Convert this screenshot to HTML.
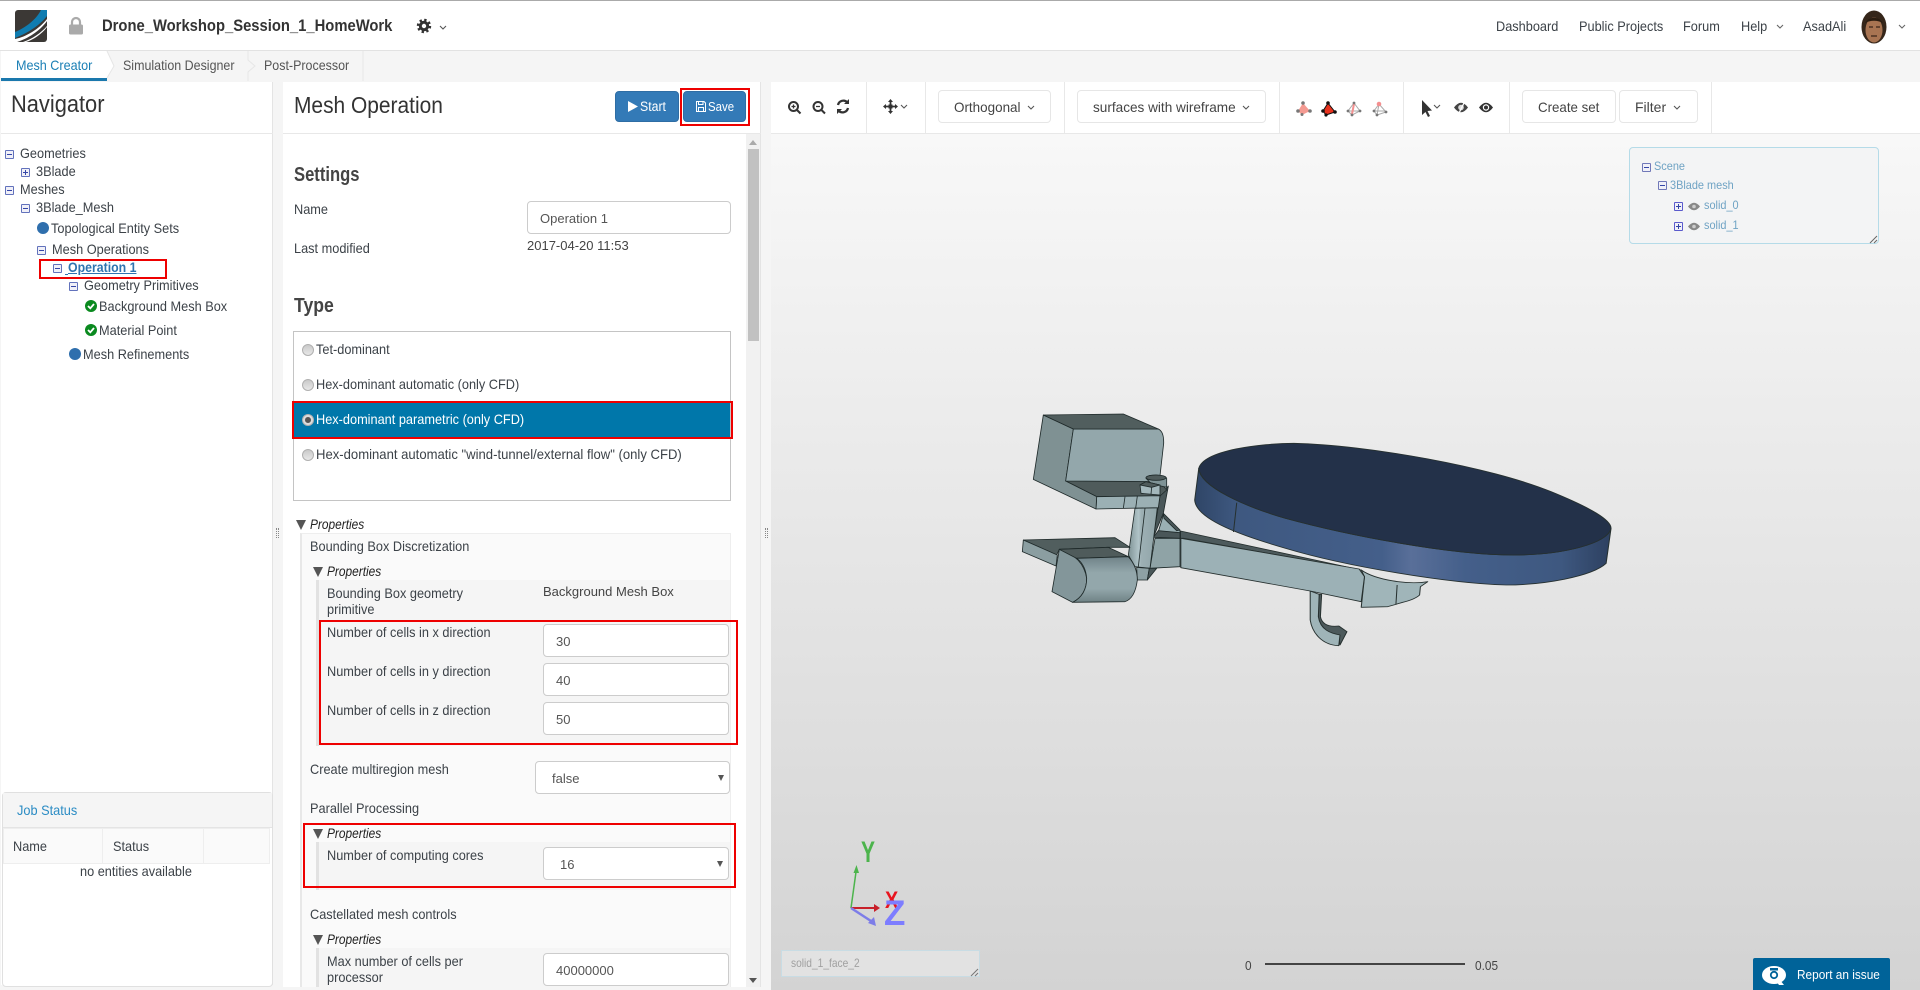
<!DOCTYPE html>
<html><head><meta charset="utf-8"><title>Mesh Operation</title>
<style>
html,body{margin:0;padding:0;width:1920px;height:990px;overflow:hidden;background:#f5f5f5;font-family:"Liberation Sans",sans-serif;color:#3c4248}
.r{position:absolute;box-sizing:border-box}
.t{position:absolute;white-space:nowrap;line-height:20px;font-size:14px;transform:scaleX(.91);transform-origin:0 0;font-weight:normal;font-style:normal}
.pr{font-style:italic;color:#222;transform:scaleX(.85)}
.a{position:absolute;white-space:nowrap;line-height:20px;font-size:13px;color:#555}
.red{position:absolute;box-sizing:border-box;border:2px solid #ee0000}
.inp{position:absolute;box-sizing:border-box;background:#fff;border:1px solid #ccc;border-radius:4px;height:33px}
.tb{position:absolute;box-sizing:border-box;background:#fff;border:1px solid #e6e6e6;border-radius:4px;height:33px;top:90px}
.sel::after{content:"";position:absolute;right:5px;top:13px;border:3px solid transparent;border-top:6px solid #555;border-bottom:0}
.m,.p{position:absolute;box-sizing:border-box;width:9px;height:9px;border:1px solid #6272bc;border-radius:1px;background:#f0f0f8}
.m::before,.p::before{content:"";position:absolute;left:1px;top:3px;width:5px;height:1px;background:#3546a8}
.p::after{content:"";position:absolute;left:3px;top:1px;width:1px;height:5px;background:#3546a8}
.c{position:absolute;width:12px;height:12px;border-radius:50%;background:#2f6fad}
.k{position:absolute;width:12px;height:12px}
.rd{position:absolute;box-sizing:border-box;width:12px;height:12px;border-radius:50%;background:linear-gradient(#c9c9c9,#e8e8e8);border:1px solid #b0b0b0}
.tri{position:absolute;border-left:5.5px solid transparent;border-right:5.5px solid transparent;border-top:10px solid #555}
.v{position:absolute;top:82px;height:51px;width:1px;background:#e8e8e8}
.sc{color:#6fa3c4;font-size:12px}
svg{position:absolute;overflow:visible}
</style></head><body>

<!-- top bar -->
<div class="r" style="left:0;top:0;width:1920px;height:51px;background:#fff;border-top:1px solid #aaa;border-bottom:1px solid #e2e2e2"></div>
<svg style="left:15px;top:10px" width="32" height="32" viewBox="0 0 32 32"><rect width="32" height="32" rx="3" fill="#3b3835"/><path d="M0 22C10 18 21 10 26 0H32V6C25 15 13 23 0 28Z" fill="#0f7cb0"/><path d="M0 29C11 27 24 19 32 9V11C25 21 12 29 2 32H0Z" fill="#fff"/><path d="M8 32C17 29 26 23 32 16V17C27 24 18 30 11 32Z" fill="#fff"/></svg>
<svg style="left:68px;top:17px" width="16" height="18" viewBox="0 0 16 18"><path d="M4 8V5a4 4 0 0 1 8 0v3" fill="none" stroke="#aaa" stroke-width="2.2"/><rect x="1" y="7.500" width="14" height="10" rx="1.500" fill="#aaa"/></svg>
<b class="t" style="left:102px;top:16px;font-size:17px;font-weight:bold;color:#333;transform:scaleX(.87)">Drone_Workshop_Session_1_HomeWork</b>
<svg style="left:417px;top:19px" width="14" height="14" viewBox="0 0 14 14"><circle cx="7" cy="7" r="3.700" fill="none" stroke="#333" stroke-width="3"/><circle cx="7" cy="7" r="6" fill="none" stroke="#333" stroke-width="2.400" stroke-dasharray="2.300 2.420"/></svg>
<svg style="left:439px;top:25px" width="8" height="5" viewBox="0 0 8 5"><path d="M1 1l3 3 3-3" fill="none" stroke="#555" stroke-width="1.100"/></svg>
<b class="t" style="left:1496px;top:16px">Dashboard</b>
<b class="t" style="left:1579px;top:16px">Public Projects</b>
<b class="t" style="left:1683px;top:16px">Forum</b>
<b class="t" style="left:1741px;top:16px">Help</b>
<svg style="left:1776px;top:24px" width="8" height="5" viewBox="0 0 8 5"><path d="M1 1l3 3 3-3" fill="none" stroke="#666" stroke-width="1.100"/></svg>
<b class="t" style="left:1803px;top:16px">AsadAli</b>
<svg style="left:1861px;top:10px" width="26" height="34" viewBox="0 0 26 34"><ellipse cx="13" cy="17" rx="12.500" ry="16.500" fill="#35261a"/><ellipse cx="13" cy="20" rx="8.500" ry="12.500" fill="#a87452"/><path d="M4 13C8 6 18 6 22 13 17 10 9 10 4 13Z" fill="#2a1c10"/><path d="M8 17h4M15 17h4M10 26h6" stroke="#3a241a" stroke-width="1.300"/></svg>
<svg style="left:1898px;top:24px" width="8" height="5" viewBox="0 0 8 5"><path d="M1 1l3 3 3-3" fill="none" stroke="#666" stroke-width="1.100"/></svg>

<!-- tabs -->
<div class="r" style="left:0;top:51px;width:1920px;height:31px;background:#f5f5f5"></div>
<div class="r" style="left:1px;top:51px;width:106px;height:30px;background:#fff;border-bottom:3px solid #1a78ad"></div>
<svg style="left:105px;top:51px" width="260" height="30" viewBox="0 0 260 30"><path d="M2 0L9 15 2 27" fill="#fff" stroke="#e6e6e6"/><path d="M143 0V9L150 15 143 21V30M258 0V30" fill="none" stroke="#e6e6e6"/></svg>
<b class="t" style="left:16px;top:55px;color:#1a7fb5;transform:scaleX(.9)">Mesh Creator</b>
<b class="t" style="left:123px;top:55px;color:#555;transform:scaleX(.89)">Simulation Designer</b>
<b class="t" style="left:264px;top:55px;color:#555;transform:scaleX(.89)">Post-Processor</b>

<!-- navigator -->
<div class="r" style="left:1px;top:82px;width:272px;height:903px;background:#fff;border-right:1px solid #e4e4e4"></div>
<div class="r" style="left:1px;top:133px;width:272px;height:1px;background:#e8e8e8"></div>
<b class="t" style="left:11px;top:95px;font-size:24px;color:#333">Navigator</b>
<i class="m" style="left:5px;top:150px"></i><b class="t" style="left:20px;top:143px">Geometries</b>
<i class="p" style="left:21px;top:168px"></i><b class="t" style="left:36px;top:161px">3Blade</b>
<i class="m" style="left:5px;top:186px"></i><b class="t" style="left:20px;top:179px">Meshes</b>
<i class="m" style="left:21px;top:204px"></i><b class="t" style="left:36px;top:197px">3Blade_Mesh</b>
<i class="c" style="left:37px;top:222px"></i><b class="t" style="left:51px;top:218px">Topological Entity Sets</b>
<i class="m" style="left:37px;top:246px"></i><b class="t" style="left:52px;top:239px">Mesh Operations</b>
<i class="m" style="left:53px;top:264px"></i><b class="t" style="left:68px;top:257px;font-weight:bold;color:#2f74b0;text-decoration:underline;transform:scaleX(.88)">Operation 1</b>
<div class="r" style="left:65px;top:274px;width:3px;height:1px;background:#2f74b0"></div>
<div class="red" style="left:39px;top:259px;width:128px;height:20px"></div>
<i class="m" style="left:69px;top:282px"></i><b class="t" style="left:84px;top:275px">Geometry Primitives</b>
<svg class="k" style="left:85px;top:300px" viewBox="0 0 12 12"><circle cx="6" cy="6" r="6" fill="#0a8a1f"/><path d="M3 6l2.300 2.300L9 4" fill="none" stroke="#fff" stroke-width="1.800"/></svg><b class="t" style="left:99px;top:296px">Background Mesh Box</b>
<svg class="k" style="left:85px;top:324px" viewBox="0 0 12 12"><circle cx="6" cy="6" r="6" fill="#0a8a1f"/><path d="M3 6l2.300 2.300L9 4" fill="none" stroke="#fff" stroke-width="1.800"/></svg><b class="t" style="left:99px;top:320px">Material Point</b>
<i class="c" style="left:69px;top:348px"></i><b class="t" style="left:83px;top:344px">Mesh Refinements</b>

<!-- job status -->
<div class="r" style="left:2px;top:792px;width:271px;height:195px;background:#fff;border:1px solid #e0e0e0;border-radius:4px"></div>
<div class="r" style="left:3px;top:793px;width:269px;height:35px;background:#f5f5f5;border-bottom:1px solid #e4e4e4"></div>
<b class="t" style="left:17px;top:800px;color:#2b8cc4">Job Status</b>
<div class="r" style="left:3px;top:828px;width:267px;height:36px;background:#fafafa;border:1px solid #eee"></div>
<div class="r" style="left:102px;top:828px;width:1px;height:36px;background:#eee"></div>
<div class="r" style="left:203px;top:828px;width:1px;height:36px;background:#eee"></div>
<b class="t" style="left:13px;top:836px">Name</b>
<b class="t" style="left:113px;top:836px">Status</b>
<b class="t" style="left:80px;top:861px">no entities available</b>
<div class="r" style="left:276px;top:528px;width:3px;height:10px;border-left:1px dotted #888;border-right:1px dotted #888"></div>

<!-- mesh operation panel -->
<div class="r" style="left:283px;top:82px;width:478px;height:905px;background:#fff;border-right:1px solid #e4e4e4"></div>
<div class="r" style="left:283px;top:133px;width:478px;height:1px;background:#e8e8e8"></div>
<b class="t" style="left:294px;top:95px;font-size:23px;color:#333">Mesh Operation</b>
<div class="r" style="left:615px;top:91px;width:64px;height:31px;background:#337ab7;border-radius:4px;border:1px solid #2e6da4"></div>
<svg style="left:628px;top:101px" width="10" height="11" viewBox="0 0 10 11"><path d="M0 0L10 5.500 0 11Z" fill="#fff"/></svg>
<b class="t" style="left:640px;top:97px;color:#fff;font-size:13.500px">Start</b>
<div class="r" style="left:683px;top:91px;width:63px;height:31px;background:#337ab7;border-radius:4px;border:1px solid #2e6da4"></div>
<svg style="left:696px;top:101px" width="10" height="11" viewBox="0 0 10 11"><path d="M.5.500H8L9.500 2V10.500H.5ZM2.500.5V3.500H7V.5M2.500 10.500V6.500H7.500V10.500" fill="none" stroke="#fff" stroke-width="1"/></svg>
<b class="t" style="left:708px;top:97px;color:#fff;font-size:13px;transform:scaleX(.88)">Save</b>
<div class="red" style="left:680px;top:88px;width:70px;height:38px"></div>
<!-- scrollbar -->
<div class="r" style="left:746px;top:134px;width:14px;height:853px;background:#f1f1f1"></div>
<div class="r" style="left:748px;top:149px;width:11px;height:192px;background:#c1c1c1"></div>
<svg style="left:749px;top:140px" width="9" height="5"><path d="M0 5L4 0 8 5Z" fill="#aaa"/></svg>
<svg style="left:749px;top:978px" width="9" height="5"><path d="M0 0L4 5 8 0Z" fill="#555"/></svg>

<b class="t" style="left:294px;top:165px;font-size:20px;font-weight:bold;color:#444;transform:scaleX(.83)">Settings</b>
<b class="t" style="left:294px;top:199px">Name</b>
<div class="inp" style="left:527px;top:201px;width:204px"></div>
<span class="a" style="left:540px;top:209px">Operation 1</span>
<b class="t" style="left:294px;top:238px">Last modified</b>
<span class="a" style="left:527px;top:236px;color:#444">2017-04-20 11:53</span>
<b class="t" style="left:294px;top:296px;font-size:20px;font-weight:bold;color:#444;transform:scaleX(.88)">Type</b>
<div class="r" style="left:293px;top:331px;width:438px;height:170px;background:#fff;border:1px solid #c4c4c4"></div>
<div class="r" style="left:294px;top:403px;width:436px;height:34px;background:#0077aa"></div>
<div class="red" style="left:292px;top:401px;width:441px;height:38px"></div>
<i class="rd" style="left:302px;top:344px"></i><b class="t" style="left:316px;top:339px">Tet-dominant</b>
<i class="rd" style="left:302px;top:379px"></i><b class="t" style="left:316px;top:374px">Hex-dominant automatic (only CFD)</b>
<i class="rd" style="left:302px;top:414px;background:radial-gradient(circle,#555 0 2.700px,#ddd 3.300px)"></i><b class="t" style="left:316px;top:409px;color:#fff">Hex-dominant parametric (only CFD)</b>
<i class="rd" style="left:302px;top:449px"></i><b class="t" style="left:316px;top:444px;transform:scaleX(.935)">Hex-dominant automatic "wind-tunnel/external flow" (only CFD)</b>

<i class="tri" style="left:296px;top:520px"></i><b class="t pr" style="left:310px;top:514px">Properties</b>
<div class="r" style="left:300px;top:533px;width:431px;height:454px;background:#fafafa;border-left:2px solid #e8e8e8;border-top:1px solid #eee;border-right:1px solid #eee"></div>
<b class="t" style="left:310px;top:536px">Bounding Box Discretization</b>
<i class="tri" style="left:313px;top:567px"></i><b class="t pr" style="left:327px;top:561px">Properties</b>
<div class="r" style="left:316px;top:580px;width:414px;height:166px;background:#f5f5f5;border-left:3px solid #e2e2e2"></div>
<b class="t" style="left:327px;top:583px">Bounding Box geometry</b>
<b class="t" style="left:327px;top:599px">primitive</b>
<span class="a" style="left:543px;top:582px;color:#444">Background Mesh Box</span>
<b class="t" style="left:327px;top:622px">Number of cells in x direction</b>
<div class="inp" style="left:543px;top:624px;width:186px"></div><span class="a" style="left:556px;top:632px">30</span>
<b class="t" style="left:327px;top:661px">Number of cells in y direction</b>
<div class="inp" style="left:543px;top:663px;width:186px"></div><span class="a" style="left:556px;top:671px">40</span>
<b class="t" style="left:327px;top:700px">Number of cells in z direction</b>
<div class="inp" style="left:543px;top:702px;width:186px"></div><span class="a" style="left:556px;top:710px">50</span>
<div class="red" style="left:319px;top:620px;width:419px;height:125px"></div>
<b class="t" style="left:310px;top:759px">Create multiregion mesh</b>
<div class="inp sel" style="left:535px;top:761px;width:195px"></div><span class="a" style="left:552px;top:769px">false</span>
<b class="t" style="left:310px;top:798px">Parallel Processing</b>
<i class="tri" style="left:313px;top:829px"></i><b class="t pr" style="left:327px;top:823px">Properties</b>
<div class="r" style="left:316px;top:842px;width:414px;height:48px;background:#f5f5f5;border-left:3px solid #e2e2e2"></div>
<b class="t" style="left:327px;top:845px">Number of computing cores</b>
<div class="inp sel" style="left:543px;top:847px;width:186px"></div><span class="a" style="left:560px;top:855px">16</span>
<div class="red" style="left:303px;top:823px;width:433px;height:65px"></div>
<b class="t" style="left:310px;top:904px">Castellated mesh controls</b>
<i class="tri" style="left:313px;top:935px"></i><b class="t pr" style="left:327px;top:929px">Properties</b>
<div class="r" style="left:316px;top:948px;width:414px;height:39px;background:#f5f5f5;border-left:3px solid #e2e2e2"></div>
<b class="t" style="left:327px;top:951px">Max number of cells per</b>
<b class="t" style="left:327px;top:967px">processor</b>
<div class="inp" style="left:543px;top:953px;width:186px"></div><span class="a" style="left:556px;top:961px">40000000</span>
<div class="r" style="left:765px;top:528px;width:3px;height:10px;border-left:1px dotted #888;border-right:1px dotted #888"></div>

<!-- viewer -->
<div class="r" style="left:771px;top:134px;width:1149px;height:856px;background:linear-gradient(#f8f8f8,#d3d3d3)"></div>
<div class="r" style="left:771px;top:82px;width:1149px;height:52px;background:#fff;border-bottom:1px solid #e8e8e8"></div>
<i class="v" style="left:866px"></i><i class="v" style="left:925px"></i><i class="v" style="left:1064px"></i><i class="v" style="left:1279px"></i><i class="v" style="left:1403px"></i><i class="v" style="left:1509px"></i><i class="v" style="left:1711px"></i>

<svg style="left:780px;top:90px" width="130" height="35" viewBox="0 0 130 35">
<g fill="none" stroke="#333" stroke-width="2"><circle cx="13.500" cy="16.500" r="4.500"/><path d="M17 20l3.500 3.500"/><circle cx="38" cy="16.500" r="4.500"/><path d="M41.500 20l3.500 3.500"/></g>
<path d="M11.500 16.500h4M13.500 14.500v4M36 16.500h4" stroke="#333" stroke-width="1.300"/>
<path d="M58 15a5.500 5.500 0 0 1 9.500-2.500M68 18a5.500 5.500 0 0 1-9.500 2.500" fill="none" stroke="#333" stroke-width="2.300"/><path d="M69 9v5h-5ZM57 24v-5h5Z" fill="#333"/>
<path d="M110.500 11v11M105 16.500h11" stroke="#333" stroke-width="1.800"/><path d="M110.500 9l2.500 3h-5ZM110.500 24l2.500-3h-5ZM103 16.500l3-2.500v5ZM118 16.500l-3-2.500v5Z" fill="#333"/><rect x="108.500" y="14.500" width="4" height="4" fill="#333"/>
<path d="M121 15l3 3 3-3" fill="none" stroke="#555" stroke-width="1.100"/></svg>

<div class="tb" style="left:938px;width:113px"></div><b class="t" style="left:954px;top:97px;color:#444;transform:scaleX(.96)">Orthogonal</b>
<svg style="left:1027px;top:105px" width="8" height="5"><path d="M1 1l3 3 3-3" fill="none" stroke="#555" stroke-width="1.100"/></svg>
<div class="tb" style="left:1077px;width:189px"></div><b class="t" style="left:1093px;top:97px;color:#444;transform:scaleX(.97)">surfaces with wireframe</b>
<svg style="left:1242px;top:105px" width="8" height="5"><path d="M1 1l3 3 3-3" fill="none" stroke="#555" stroke-width="1.100"/></svg>
<div class="tb" style="left:1522px;width:94px"></div><b class="t" style="left:1538px;top:97px;color:#444;transform:scaleX(.95)">Create set</b>
<div class="tb" style="left:1619px;width:79px"></div><b class="t" style="left:1635px;top:97px;color:#444;transform:scaleX(1)">Filter</b>
<svg style="left:1673px;top:105px" width="8" height="5"><path d="M1 1l3 3 3-3" fill="none" stroke="#555" stroke-width="1.100"/></svg>

<svg style="left:1290px;top:90px" width="210" height="35" viewBox="0 0 210 35">
<path d="M13 13L20 21 12 25 8 21Z" fill="#f49a92"/><circle cx="13" cy="13" r="1.800" fill="#777"/><circle cx="8" cy="21" r="1.800" fill="#777"/><circle cx="20" cy="21" r="1.800" fill="#777"/><circle cx="12" cy="24.500" r="1.500" fill="#777"/>
<path d="M38 13L45 22 36 25 33 21Z" fill="#e8321e" stroke="#111"/><circle cx="38" cy="13" r="1.800" fill="#111"/><circle cx="33" cy="21" r="1.800" fill="#111"/><circle cx="45" cy="22" r="1.800" fill="#111"/><circle cx="36" cy="25" r="1.600" fill="#111"/>
<path d="M64 13L70 21 62 25 58 21ZM58 21H70M64 13L62 25" fill="none" stroke="#aaa"/><path d="M64 14L62 24" stroke="#f49090" stroke-width="2"/><circle cx="64" cy="13" r="1.400" fill="#777"/><circle cx="58" cy="21" r="1.400" fill="#777"/><circle cx="70" cy="21" r="1.400" fill="#777"/><circle cx="62" cy="25" r="1.400" fill="#777"/>
<path d="M89 14L96 22 87 25 84 21ZM84 21H96M89 14L87 25" fill="none" stroke="#aaa"/><circle cx="89" cy="14" r="2.300" fill="#f49090"/><circle cx="84" cy="21" r="1.400" fill="#777"/><circle cx="96" cy="22" r="1.400" fill="#777"/><circle cx="87" cy="25" r="1.400" fill="#777"/>
<path d="M132 10V25L135.500 22 138 27 140 26 137.500 21 142 20.500Z" fill="#333"/><path d="M144 15l3 3 3-3" fill="none" stroke="#555" stroke-width="1.100"/>
<path d="M164 17.500Q171 8 178 17.500 171 27 164 17.500Z" fill="#444"/><circle cx="171" cy="17.500" r="2.800" fill="#ddd"/><path d="M175 11L168 25" stroke="#fff" stroke-width="1.300"/>
<path d="M189 17.500Q196 8 203 17.500 196 27 189 17.500Z" fill="#333"/><circle cx="196" cy="17.500" r="3.200" fill="#fff"/><circle cx="196" cy="17.500" r="2" fill="#333"/></svg>

<!-- scene panel -->
<div class="r" style="left:1629px;top:147px;width:250px;height:97px;background:#f3f4f5;border:1px solid #b5dbe8;border-radius:4px"></div>
<i class="m" style="left:1642px;top:163px;border-color:#7078b8"></i><b class="t sc" style="left:1654px;top:156px">Scene</b>
<i class="m" style="left:1658px;top:181px;border-color:#7078b8"></i><b class="t sc" style="left:1670px;top:175px">3Blade mesh</b>
<i class="p" style="left:1674px;top:202px;border-color:#5a5acc"></i><b class="t sc" style="left:1704px;top:195px">solid_0</b>
<i class="p" style="left:1674px;top:222px;border-color:#5a5acc"></i><b class="t sc" style="left:1704px;top:215px">solid_1</b>
<svg style="left:1688px;top:202px" width="12" height="9" viewBox="0 0 12 9"><path d="M0 4.500Q6-3 12 4.500 6 12 0 4.500Z" fill="#888"/><circle cx="6" cy="4.500" r="1.800" fill="#ccc"/></svg>
<svg style="left:1688px;top:222px" width="12" height="9" viewBox="0 0 12 9"><path d="M0 4.500Q6-3 12 4.500 6 12 0 4.500Z" fill="#888"/><circle cx="6" cy="4.500" r="1.800" fill="#ccc"/></svg>
<svg style="left:1870px;top:235px" width="8" height="8"><path d="M0 8L7 1M4 8L7 5" stroke="#666"/></svg>

<!-- model: arm, hub, hook, disc -->
<svg style="left:1000px;top:400px" width="640" height="260" viewBox="0 0 1568 780" preserveAspectRatio="none">
<defs>
<linearGradient id="d" x1="0" x2="1" y1="0" y2="0"><stop offset="0" stop-color="#2f4566"/><stop offset=".1" stop-color="#3e5880"/><stop offset=".45" stop-color="#445f8a"/><stop offset=".52" stop-color="#596f99"/><stop offset=".65" stop-color="#445f8a"/><stop offset=".88" stop-color="#3e5880"/><stop offset="1" stop-color="#2d4060"/></linearGradient>
</defs>
<g stroke="#26302f" stroke-width="2.500" stroke-linejoin="round">
<path d="M442 393L885 510 450 415 442 415Z" fill="#4d5a5c"/>
<path d="M885 510C920 540 1000 555 1048 545L1030 560 1028 585C1015 600 990 605 970 613L950 620 885 622 893 530Z" fill="#a0b5b9"/>
<path d="M973 555L970 613" fill="none"/>
<path d="M782 583L780 650C785 690 810 700 830 705L833 735 850 695 830 678C815 680 790 680 785 650L788 583Z" fill="#4d5a5c"/>
<path d="M760 573L760 660C765 700 790 735 830 737L833 705C810 700 785 690 780 650L782 583Z" fill="#9fb4b8"/>
<path d="M443 415L880 507 893 530 885 605 760 573 443 503Z" fill="#9cb1b6"/>
<path d="M487 205C490 260 600 320 700 355 850 405 1100 465 1260 465 1380 465 1490 430 1497 385L1485 490C1450 530 1330 555 1240 555 1100 550 850 500 700 445 600 410 480 360 477 300Z" fill="url(#d)"/>
<path d="M580 308L572 396" fill="none"/>
<path d="M487 205C500 150 640 130 720 130 900 135 1200 200 1350 275 1450 325 1497 360 1497 385 1490 430 1380 465 1260 465 1100 465 850 405 700 355 600 320 490 260 487 205Z" fill="#233149"/>
</g></svg>

<!-- model: brackets, box, motor -->
<svg style="left:1020px;top:410px" width="160" height="200" viewBox="0 0 480 600">
<defs>
<linearGradient id="cy" x1="0" x2="0" y1="0" y2="1"><stop offset="0" stop-color="#6f8288"/><stop offset=".35" stop-color="#93a7ab"/><stop offset=".7" stop-color="#93a7ab"/><stop offset="1" stop-color="#6f8285"/></linearGradient>
<linearGradient id="col" x1="0" x2="1" y1="0" y2="0"><stop offset="0" stop-color="#7f9396"/><stop offset=".35" stop-color="#b0c3c7"/><stop offset=".45" stop-color="#9db0b4"/><stop offset="1" stop-color="#90a4a8"/></linearGradient>
</defs>
<g stroke="#1f2a2a" stroke-width="2.500" stroke-linejoin="round">
<path d="M430 315L480 362 480 372 415 365Z" fill="#9ab0b4"/>
<path d="M430 310L480 360 470 362 432 325Z" fill="#4a5759"/>
<path d="M405 385L480 385 480 470 390 475Z" fill="#8fa3a6"/>
<path d="M400 382L415 362 480 368 480 385Z" fill="#4a5759"/>
<path d="M445 228L420 258 400 382 430 310Z" fill="#4a5759"/>
<path d="M345 295L412 293 390 475 345 470 325 435Z" fill="url(#col)"/>
<path d="M375 295L355 470" fill="none"/>
<path d="M350 472L388 475 382 510 352 510Z" fill="#8ea1a4"/>
<path d="M388 475L410 475 382 510Z" fill="#4a5759"/>
<path d="M137 213L418 213 440 240 420 258 230 260Z" fill="#4f5b5b"/>
<path d="M230 260L420 257 415 293 228 297Z" fill="#9bb0b4"/>
<path d="M315 260L310 295M352 258L347 295" fill="none"/>
<path d="M70 15L160 57 137 213 230 260 228 297 40 208Z" fill="#7f9193"/>
<path d="M160 57L415 57Q432 65 431 100L418 215 137 213Z" fill="#93a7ab"/>
<path d="M70 15L310 12 415 57 160 57Z" fill="#515e5e"/>
<path d="M378 205Q378 195 408 195 438 197 440 205V232L395 222Z" fill="#7f9396"/>
<ellipse cx="408" cy="203" rx="30" ry="8" fill="#4f5b5b"/>
<path d="M360 225L378 215 420 225 420 255 363 250Z" fill="#a3b7bb"/>
<path d="M360 225L378 215 420 225 395 232Z" fill="#4f5b5b"/>
<path d="M395 232L393 253" fill="none"/>
<path d="M10 390L285 383 330 412 265 412 118 418 110 435Z" fill="#515e5e"/>
<path d="M10 390L112 435 108 468 7 425Z" fill="#8b9ea1"/>
<path d="M118 418Q190 440 200 505 200 555 158 577L96 545Z" fill="#83969a"/>
<path d="M118 418L265 412 325 440 170 445Z" fill="#4f5b5b"/>
<path d="M170 445L325 440Q352 470 352 510 345 565 315 575L158 577Q200 555 200 505 197 465 170 445Z" fill="url(#cy)"/>
</g></svg>

<!-- axes -->
<svg style="left:840px;top:835px" width="80" height="100" viewBox="0 0 80 100">
<path d="M11 73L16 37" stroke="#4cb44c" stroke-width="1.500"/><path d="M16.500 30L19 38 13.500 38Z" fill="#4cb44c"/>
<path d="M11 73H38" stroke="#c8202a" stroke-width="2"/><path d="M40 73L34 69 34 77Z" fill="#c8202a"/>
<path d="M11 73L34 88" stroke="#7d7de8" stroke-width="2.500"/><path d="M36 91L28 88 34 82Z" fill="#7d7de8"/>
<text font-family="Liberation Sans,sans-serif" font-size="30" font-weight="bold" fill="#4cb44c" transform="translate(21 27) scale(.7 1)">Y</text>
<text font-family="Liberation Sans,sans-serif" font-size="24" font-weight="bold" fill="#e8141e" transform="translate(45 73) scale(.83 1)">X</text>
<text font-family="Liberation Sans,sans-serif" font-size="35" font-weight="bold" fill="#7d7dff" transform="translate(44 90)">Z</text>
</svg>

<div class="r" style="left:781px;top:950px;width:199px;height:27px;background:#e2e2e2;border:1px solid #c8dce4"></div>
<b class="t" style="left:791px;top:953px;font-size:12px;color:#a0a0a0;transform:scaleX(.85)">solid_1_face_2</b>
<svg style="left:971px;top:968px" width="8" height="8"><path d="M0 8L7 1M4 8L7 5" stroke="#777"/></svg>
<b class="t" style="left:1245px;top:956px;font-size:13px;color:#444">0</b>
<div class="r" style="left:1265px;top:963px;width:200px;height:2px;background:#444"></div>
<b class="t" style="left:1475px;top:956px;font-size:13px;color:#444">0.05</b>
<div class="r" style="left:1753px;top:958px;width:137px;height:32px;background:#006399;border-radius:2px 2px 0 0"></div>
<svg style="left:1762px;top:965px" width="24" height="20" viewBox="0 0 24 20"><ellipse cx="12" cy="10" rx="12" ry="9" fill="#fff"/><path d="M18 15l4 5h-5l-3-4Z" fill="#fff"/><circle cx="12" cy="10" r="3.200" fill="none" stroke="#006399" stroke-width="1.800"/><rect x="8" y="3" width="8" height="2.500" fill="#006399"/></svg>
<b class="t" style="left:1797px;top:965px;font-size:13px;color:#fff">Report an issue</b>
</body></html>
